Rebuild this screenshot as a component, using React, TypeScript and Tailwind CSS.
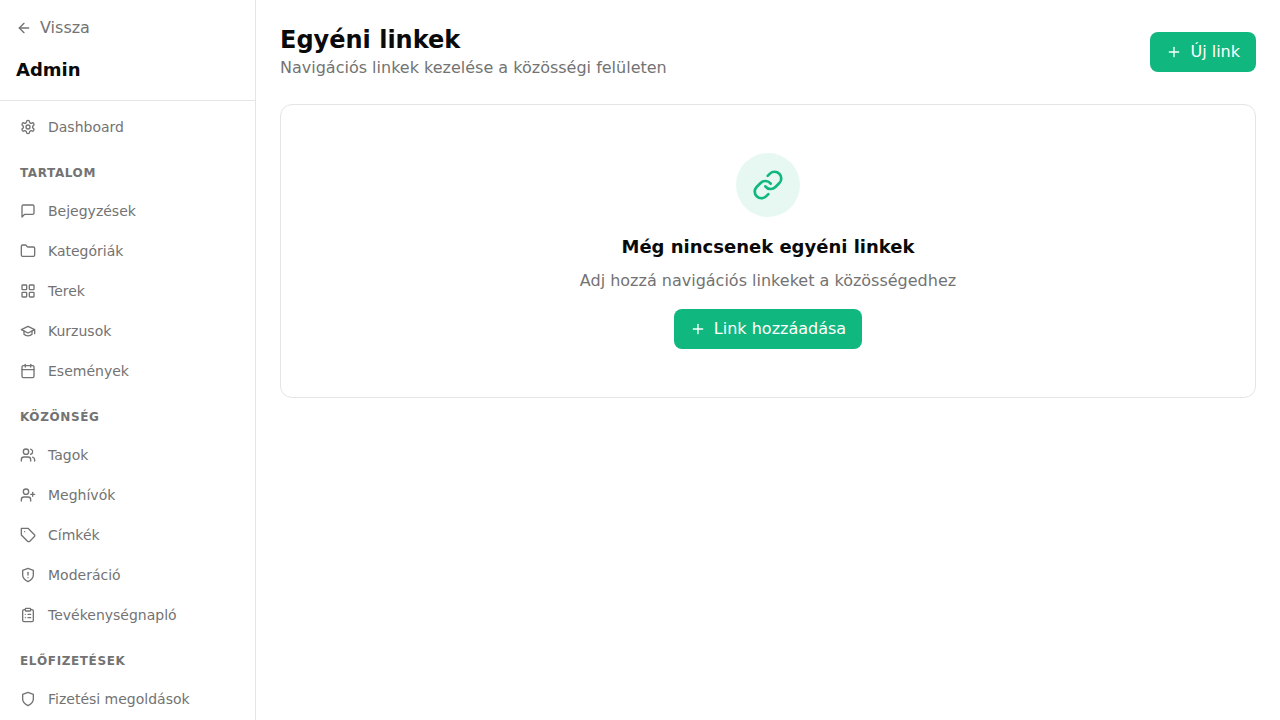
import type { ComponentType, ReactNode } from "react"
import {
  ArrowLeft,
  Calendar,
  ClipboardList,
  Folder,
  LayoutGrid,
  Link,
  Plus,
  UserPlus,
  Users,
} from "lucide-react"

type IconProps = { className?: string }
type NavItem = { label: string; href: string; icon: ComponentType<IconProps> }
type NavSection = { title?: string; items: NavItem[] }

function Icon({ className, children }: IconProps & { children: ReactNode }) {
  return (
    <svg viewBox="0 0 24 24" fill="none" stroke="currentColor" strokeWidth="2" strokeLinecap="round" strokeLinejoin="round" className={className} aria-hidden="true">
      {children}
    </svg>
  )
}

const Settings = ({ className }: IconProps) => (
  <Icon className={className}>
    <path d="M12.22 2h-.44a2 2 0 0 0-2 2v.18a2 2 0 0 1-1 1.73l-.43.25a2 2 0 0 1-2 0l-.15-.08a2 2 0 0 0-2.73.73l-.22.38a2 2 0 0 0 .73 2.73l.15.1a2 2 0 0 1 1 1.72v.51a2 2 0 0 1-1 1.74l-.15.09a2 2 0 0 0-.73 2.73l.22.38a2 2 0 0 0 2.73.73l.15-.08a2 2 0 0 1 2 0l.43.25a2 2 0 0 1 1 1.73V20a2 2 0 0 0 2 2h.44a2 2 0 0 0 2-2v-.18a2 2 0 0 1 1-1.73l.43-.25a2 2 0 0 1 2 0l.15.08a2 2 0 0 0 2.73-.73l.22-.39a2 2 0 0 0-.73-2.73l-.15-.08a2 2 0 0 1-1-1.74v-.5a2 2 0 0 1 1-1.74l.15-.09a2 2 0 0 0 .73-2.73l-.22-.38a2 2 0 0 0-2.73-.73l-.15.08a2 2 0 0 1-2 0l-.43-.25a2 2 0 0 1-1-1.73V4a2 2 0 0 0-2-2z" />
    <circle cx="12" cy="12" r="3" />
  </Icon>
)

const MessageSquare = ({ className }: IconProps) => (
  <Icon className={className}>
    <path d="M21 15a2 2 0 0 1-2 2H7l-4 4V5a2 2 0 0 1 2-2h14a2 2 0 0 1 2 2z" />
  </Icon>
)

const GraduationCap = ({ className }: IconProps) => (
  <Icon className={className}>
    <path d="M22 10v6M2 10l10-5 10 5-10 5z" />
    <path d="M6 12v5c3 3 9 3 12 0v-5" />
  </Icon>
)

const Tag = ({ className }: IconProps) => (
  <Icon className={className}>
    <path d="M12 2H2v10l9.29 9.29c.94.94 2.48.94 3.42 0l6.58-6.58c.94-.94.94-2.48 0-3.42L12 2Z" />
    <path d="M7 7h.01" />
  </Icon>
)

const Shield = ({ className }: IconProps) => (
  <Icon className={className}>
    <path d="M12 22s8-4 8-10V5l-8-3-8 3v7c0 6 8 10 8 10" />
  </Icon>
)

const ShieldAlert = ({ className }: IconProps) => (
  <Icon className={className}>
    <path d="M12 22s8-4 8-10V5l-8-3-8 3v7c0 6 8 10 8 10" />
    <path d="M12 8v4" />
    <path d="M12 16h.01" />
  </Icon>
)

const sections: NavSection[] = [
  { items: [{ label: "Dashboard", href: "#dashboard", icon: Settings }] },
  {
    title: "Tartalom",
    items: [
      { label: "Bejegyzések", href: "#posts", icon: MessageSquare },
      { label: "Kategóriák", href: "#categories", icon: Folder },
      { label: "Terek", href: "#spaces", icon: LayoutGrid },
      { label: "Kurzusok", href: "#courses", icon: GraduationCap },
      { label: "Események", href: "#events", icon: Calendar },
    ],
  },
  {
    title: "Közönség",
    items: [
      { label: "Tagok", href: "#members", icon: Users },
      { label: "Meghívók", href: "#invites", icon: UserPlus },
      { label: "Címkék", href: "#tags", icon: Tag },
      { label: "Moderáció", href: "#moderation", icon: ShieldAlert },
      { label: "Tevékenységnapló", href: "#activity", icon: ClipboardList },
    ],
  },
  {
    title: "Előfizetések",
    items: [{ label: "Fizetési megoldások", href: "#payments", icon: Shield }],
  },
]

function Sidebar() {
  return (
    <aside className="flex w-64 shrink-0 flex-col border-r border-neutral-200">
      <div className="border-b border-neutral-200 p-4">
        <a href="#back" className="mb-4 flex items-center gap-2 text-[#737373]">
          <ArrowLeft className="size-4" />
          Vissza
        </a>
        <h2 className="text-lg font-semibold">Admin</h2>
      </div>
      <nav className="min-h-0 flex-1 space-y-1 overflow-y-auto p-2 [scrollbar-width:none]">
        {sections.map((section) => (
          <div key={section.title ?? "main"} className="space-y-1">
            {section.title && (
              <h3 className="px-3 pt-4 pb-2 text-xs font-semibold tracking-wider text-[#737373] uppercase">{section.title}</h3>
            )}
            {section.items.map(({ label, href, icon: ItemIcon }) => (
              <a key={href} href={href} className="flex items-center gap-3 rounded-lg px-3 py-2 text-sm text-[#737373] hover:bg-neutral-100">
                <ItemIcon className="size-4" />
                {label}
              </a>
            ))}
          </div>
        ))}
      </nav>
    </aside>
  )
}

function AddButton({ label }: { label: string }) {
  return (
    <button type="button" className="inline-flex items-center gap-2 rounded-lg bg-[#10b77f] px-4 py-2 text-white hover:bg-[#10b77f]/90">
      <Plus className="size-4" />
      {label}
    </button>
  )
}

export default function App() {
  return (
    <div className="flex h-screen bg-white font-['DejaVu_Sans',sans-serif] text-[#0a0a0a]">
      <Sidebar />
      <main className="min-w-0 flex-1 overflow-y-auto p-6">
        <div className="mb-6 flex items-center justify-between">
          <div>
            <h1 className="text-2xl font-bold">Egyéni linkek</h1>
            <p className="text-[#737373]">Navigációs linkek kezelése a közösségi felületen</p>
          </div>
          <AddButton label="Új link" />
        </div>
        <div className="flex flex-col items-center rounded-xl border border-neutral-200 p-12 text-center">
          <div className="mb-4 flex size-16 items-center justify-center rounded-full bg-[#10b77f]/10">
            <Link className="size-8 text-[#10b77f]" />
          </div>
          <h3 className="mb-2 text-lg font-semibold">Még nincsenek egyéni linkek</h3>
          <p className="mb-4 text-[#737373]">Adj hozzá navigációs linkeket a közösségedhez</p>
          <AddButton label="Link hozzáadása" />
        </div>
      </main>
    </div>
  )
}
